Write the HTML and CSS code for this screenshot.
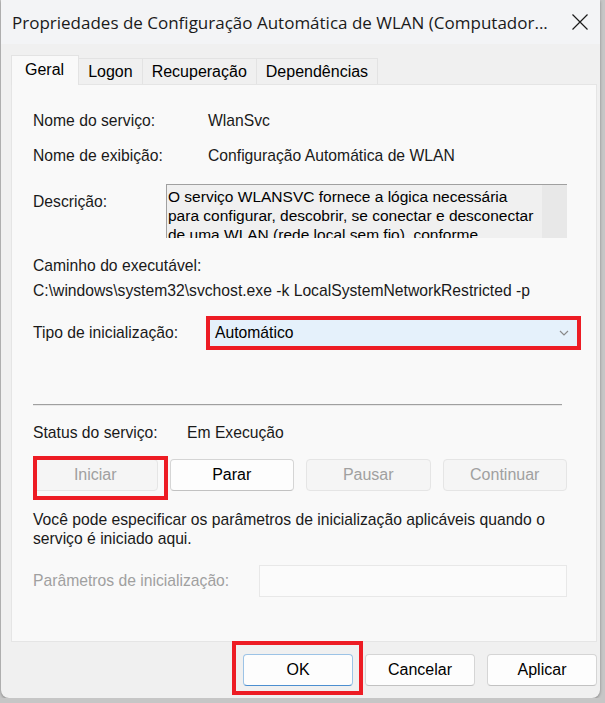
FILE: index.html
```html
<!DOCTYPE html>
<html lang="pt-BR">
<head>
    <meta charset="UTF-8">
    <title>Propriedades de Configuração Automática de WLAN</title>
    <link rel="stylesheet" href="styles.css">
</head>
<body>
    <div class="window">
        <div class="titlebar">
            <span class="title">Propriedades de Configuração Automática de WLAN (Computador...</span>
            <span class="close">
                <svg width="18" height="18" viewBox="0 0 18 18">
                    <path d="M1.5 1.5 L16.5 16.5 M16.5 1.5 L1.5 16.5" stroke="#1a1a1a" stroke-width="1.2" fill="none"/>
                </svg>
            </span>
        </div>

        <div class="tabs">
            <div class="tab active">Geral</div>
            <div class="tab">Logon</div>
            <div class="tab">Recuperação</div>
            <div class="tab">Dependências</div>
        </div>

        <div class="panel">
            <div class="row row-name">
                <span class="label">Nome do serviço:</span>
                <span>WlanSvc</span>
            </div>
            <div class="row row-display">
                <span class="label">Nome de exibição:</span>
                <span>Configuração Automática de WLAN</span>
            </div>
            <div class="row row-desc">
                <span class="label">Descrição:</span>
                <div class="desc-box">
                    <div class="desc-text">O serviço WLANSVC fornece a lógica necessária para configurar, descobrir, se conectar e desconectar de uma WLAN (rede local sem fio), conforme definido pelos padrões IEEE 802.11.</div>
                    <div class="desc-scroll"></div>
                </div>
            </div>
            <div class="path-label">Caminho do executável:</div>
            <div class="path">C:\windows\system32\svchost.exe -k LocalSystemNetworkRestricted -p</div>
            <div class="row row-start">
                <span class="label">Tipo de inicialização:</span>
                <div class="highlight combo-wrap">
                    <div class="combo">
                        <span>Automático</span>
                        <svg width="10" height="6" viewBox="0 0 10 6">
                            <path d="M1 1 L5 5 L9 1" stroke="#8a8a8a" stroke-width="1.2" fill="none"/>
                        </svg>
                    </div>
                </div>
            </div>
            <div class="separator"></div>
            <div class="row row-status">
                <span class="label">Status do serviço:</span>
                <span>Em Execução</span>
            </div>
            <div class="actions">
                <button class="btn" disabled>Iniciar</button>
                <button class="btn">Parar</button>
                <button class="btn" disabled>Pausar</button>
                <button class="btn" disabled>Continuar</button>
                <div class="highlight mark-start"></div>
            </div>
            <p class="hint">Você pode especificar os parâmetros de inicialização aplicáveis quando o serviço é iniciado aqui.</p>
            <div class="row row-params">
                <span class="label disabled">Parâmetros de inicialização:</span>
                <div class="input"></div>
            </div>
        </div>

        <div class="footer">
            <div class="ok-wrap">
                <button class="btn btn-footer btn-default">OK</button>
                <div class="highlight mark-ok"></div>
            </div>
            <button class="btn btn-footer">Cancelar</button>
            <button class="btn btn-footer">Aplicar</button>
        </div>
    </div>
</body>
</html>
```

FILE: styles.css
```css
body {
    margin: 0;
    background: #c6c6c6;
    font-family: "Liberation Sans", Arial, sans-serif;
    font-size: 15.7px;
    color: #1a1a1a;
}
.window {
    margin-left: 1px;
    width: 599px;
    height: 698px;
    background: #f0f0f0;
    border-radius: 0 0 8px 8px;
    box-shadow: 0 1px 3px rgba(0,0,0,0.35);
    display: flex;
    flex-direction: column;
    overflow: hidden;
}
.titlebar {
    height: 44px;
    flex: none;
    display: flex;
    align-items: center;
    justify-content: space-between;
    padding-left: 11px;
    background: #f3f4f6;
}
.title {
    font-family: "Open Sans", "Noto Sans", sans-serif;
    font-size: 17px;
    white-space: nowrap;
}
.close {
    width: 40px;
    display: flex;
    justify-content: center;
}
.tabs {
    display: flex;
    align-items: flex-end;
    margin: 11px 0 0 10px;
    height: 29px;
    position: relative;
    z-index: 1;
}
.tab {
    height: 26px;
    line-height: 26px;
    padding: 0 9px;
    border: 1px solid #e3e3e3;
    border-bottom: none;
    border-left: none;
    background: #f0f0f0;
    box-sizing: border-box;
    color: #000;
    font-size: 16px;
}
.tab.active {
    height: 30px;
    line-height: 27px;
    padding: 0 14px 0 13px;
    border-left: 1px solid #e3e3e3;
    background: #f9f9f9;
    margin-bottom: -1px;
}
.panel {
    margin-left: 10px;
    width: 586px;
    height: 558px;
    box-sizing: border-box;
    border: 1px solid #e5e5e5;
    background: #f9f9f9;
    padding: 26px 29px 0 21px;
    flex: none;
}
.row {
    display: flex;
    align-items: center;
    line-height: 20px;
}
.label {
    flex: none;
}
.row-name .label { width: 175px; }
.row-display { margin-top: 15px; }
.row-display .label { width: 175px; }
.row-desc {
    margin-top: 18px;
    align-items: flex-start;
}
.row-desc .label {
    width: 133px;
    padding-top: 8px;
}
.desc-box {
    flex: 1;
    height: 53px;
    display: flex;
    border-top: 1px solid #a0a0a0;
    border-left: 1px solid #a0a0a0;
    background: #f0f0f0;
    overflow: hidden;
}
.desc-text {
    flex: 1;
    font-size: 15.5px;
    line-height: 19px;
    color: #000;
    padding: 2px 7px 0 1px;
}
.desc-scroll {
    width: 25px;
    background: #e8e8e8;
}
.path-label {
    margin-top: 18px;
    line-height: 20px;
}
.path {
    margin-top: 5px;
    line-height: 20px;
    white-space: nowrap;
}
.row-start { margin-top: 15px; }
.row-start .label { width: 173px; }
.highlight {
    border: 4px solid #ed1c24;
    box-sizing: border-box;
}
.combo-wrap {
    width: 375px;
    height: 34px;
    margin-right: -14px;
}
.combo {
    height: 100%;
    background: #e5f1fb;
    display: flex;
    align-items: center;
    justify-content: space-between;
    padding: 0 8px 0 5px;
    color: #000;
}
.separator {
    margin-top: 54px;
    height: 1px;
    width: 529px;
    background: #a0a0a0;
    border-bottom: 1px solid #e8e8e8;
}
.row-status { margin-top: 17px; }
.row-status .label { width: 154px; }
.actions {
    margin-top: 16px;
    display: flex;
    gap: 12px;
    position: relative;
}
.btn {
    flex: 1;
    height: 32px;
    font-family: inherit;
    font-size: 16px;
    color: #000;
    background: #fdfdfd;
    border: 1px solid #d5d5d5;
    border-bottom-color: #c2c2c2;
    border-radius: 4px;
    padding: 0;
}
.btn:disabled {
    color: #a0a0a0;
    background: #f5f5f5;
    border-color: #e5e5e5;
}
.mark-start {
    position: absolute;
    left: 0;
    top: -3px;
    width: 135px;
    height: 44px;
}
.hint {
    margin: 19px 0 0;
    line-height: 19px;
}
.row-params { margin-top: 17px; }
.row-params .label { width: 226px; }
.label.disabled { color: #a0a0a0; }
.input {
    flex: 1;
    height: 32px;
    box-sizing: border-box;
    border: 1px solid #e8e8e8;
    background: #fbfbfb;
}
.footer {
    display: flex;
    justify-content: flex-end;
    gap: 12px;
    padding: 12px 3px 0 0;
}
.btn-footer {
    flex: none;
    width: 110px;
}
.btn-default {
    border-color: #9cc3e6;
    border-bottom-color: #4c8fd0;
}
.ok-wrap {
    position: relative;
    display: flex;
}
.mark-ok {
    position: absolute;
    left: -11px;
    top: -13px;
    width: 131px;
    height: 54px;
}
```
